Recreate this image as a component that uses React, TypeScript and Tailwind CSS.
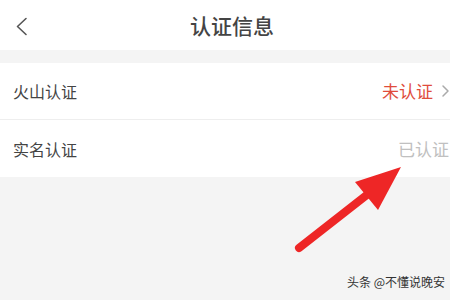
const cjk = { fontFamily: '"Noto Sans CJK SC", "Noto Sans", sans-serif' };

export default function App() {
  return (
    <div className="relative w-[450px] h-[300px] overflow-hidden bg-[#f4f4f4]" style={cjk}>
      {/* Header */}
      <div className="relative h-[50px] bg-white flex items-center justify-center">
        <svg className="absolute left-[14px] top-[17px]" width="16" height="19" viewBox="0 0 16 19">
          <path d="M12 1.5 L3.5 9.5 L12 17.5" fill="none" stroke="#555" strokeWidth="1.6" strokeLinecap="round" strokeLinejoin="round" />
        </svg>
        <h1 className="text-[21px] leading-none font-medium text-[#444] pl-[14px]">认证信息</h1>
      </div>

      {/* Rows */}
      <div className="mt-[13px] bg-white">
        <div className="h-[57px] flex items-center justify-between pl-[13px] border-b border-[#eeeeee]">
          <span className="text-[16px] text-[#444]">火山认证</span>
          <span className="flex items-center">
            <span className="text-[17px] text-[#e04c3c]">未认证</span>
            <svg className="ml-[8px]" width="9" height="14" viewBox="0 0 9 14">
              <path d="M2 2 L7 7 L2 12" fill="none" stroke="#aaa" strokeWidth="1.5" strokeLinecap="round" strokeLinejoin="round" />
            </svg>
          </span>
        </div>
        <div className="h-[57px] flex items-center justify-between pl-[13px] pr-[1px]">
          <span className="text-[16px] text-[#444]">实名认证</span>
          <span className="text-[17px] text-[#c0c0c0] whitespace-nowrap">已认证</span>
        </div>
      </div>

      {/* Arrow annotation */}
      <svg className="absolute left-0 top-0 pointer-events-none" width="450" height="300" viewBox="0 0 450 300">
        <line x1="299" y1="248" x2="368" y2="194" stroke="#ee2626" strokeWidth="8" strokeLinecap="round" />
        <polygon points="401,167 355,182 378,210" fill="#ee2626" />
      </svg>

      {/* Watermark */}
      <div className="absolute left-[347px] top-[276px] text-[12px] leading-none text-[#333] whitespace-nowrap">头条 @不懂说晚安</div>
    </div>
  );
}
